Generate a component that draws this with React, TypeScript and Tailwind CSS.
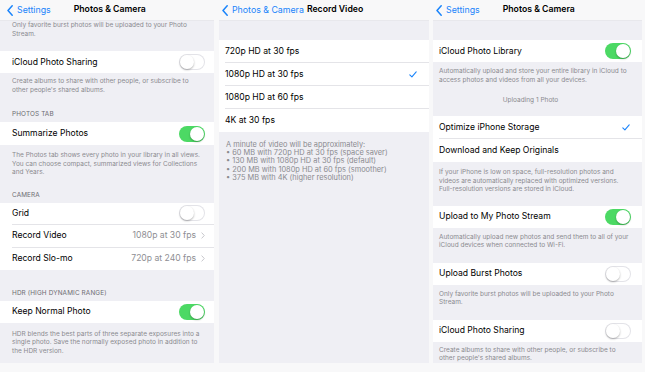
import React from 'react';

type Row = { label: string; h: number; right?: React.ReactNode };

function Chevron() {
  return (
    <svg width="6" height="11" viewBox="0 0 6 11" className="shrink-0">
      <path d="M5.2 0.8 L1 5.5 L5.2 10.2" fill="none" stroke="#1a84fb" strokeWidth="1.5" strokeLinecap="round" strokeLinejoin="round" />
    </svg>
  );
}

function Toggle({ on }: { on?: boolean }) {
  return (
    <span
      className={`w-[26px] h-[16px] rounded-full flex items-center px-[1px] shrink-0 ${
        on ? 'bg-[#4cd964] justify-end' : 'bg-white justify-start shadow-[inset_0_0_0_1px_#e3e3e8]'
      }`}
    >
      <span className="w-[14px] h-[14px] rounded-full bg-white shadow-[0_1px_2px_rgba(0,0,0,0.3)]" />
    </span>
  );
}

function Check() {
  return (
    <svg width="8" height="7" viewBox="0 0 8 7">
      <path d="M0.8 3.8 L2.9 5.9 L7.2 0.9" fill="none" stroke="#1a84fb" strokeWidth="1.1" strokeLinecap="round" strokeLinejoin="round" />
    </svg>
  );
}

function Value({ text }: { text: string }) {
  return (
    <span className="flex items-center gap-[5px] text-[#8e8e93]">
      {text}
      <svg width="4" height="7" viewBox="0 0 4 7">
        <path d="M0.6 0.6 L3.3 3.5 L0.6 6.4" fill="none" stroke="#c7c7cc" strokeWidth="1" />
      </svg>
    </span>
  );
}

function Group({ rows, pl, pr, mt }: { rows: Row[]; pl: string; pr: string; mt: string }) {
  return (
    <div className={`bg-white ${pl} ${mt}`}>
      {rows.map((r, i) => (
        <div
          key={r.label}
          style={{ height: r.h }}
          className={`flex items-center justify-between ${pr} text-[8.6px] text-black whitespace-nowrap ${
            i < rows.length - 1 ? 'border-b border-[#e4e4e8]' : ''
          }`}
        >
          <span>{r.label}</span>
          {r.right}
        </div>
      ))}
    </div>
  );
}

function Foot({ lines, cls, mt }: { lines: string[]; cls: string; mt: string }) {
  return (
    <div className={`${cls} ${mt} text-[6.5px] leading-[8.5px] text-[#8a8a8f] whitespace-nowrap`}>
      {lines.map((l) => (
        <div key={l}>{l}</div>
      ))}
    </div>
  );
}

function Header({ text, mt }: { text: string; mt: string }) {
  return (
    <div className={`px-[12px] ${mt} text-[6.4px] leading-[8px] tracking-[0.02em] text-[#6d6d72] whitespace-nowrap`}>{text}</div>
  );
}

function Nav({ back, title, gap, pl }: { back: string; title: string; gap: string; pl: string }) {
  return (
    <div className={`h-[21px] flex items-center ${pl} border-b border-[#e8e8ec] whitespace-nowrap`}>
      <Chevron />
      <span className="ml-[4px] text-[8.8px] text-[#1a84fb]">{back}</span>
      <span className={`${gap} text-[8.7px] font-semibold text-black`}>{title}</span>
    </div>
  );
}

export default function App() {
  return (
    <div className="w-[645px] h-[372px] bg-[#f8f8f9] flex overflow-hidden font-['Inter','Noto_Sans',sans-serif]">
      {/* Left: Photos & Camera, scrolled */}
      <div className="w-[214px] shrink-0 flex flex-col">
        <Nav back="Settings" title="Photos & Camera" gap="ml-[23px]" pl="pl-[7px]" />
        <div className="h-[342px] bg-[#efeff4] flex flex-col">
          <Foot cls="px-[12px]" mt="mt-0" lines={['Only favorite burst photos will be uploaded to your Photo', 'Stream.']} />
          <Group pl="pl-[12px]" pr="pr-[9px]" mt="mt-[13px]" rows={[{ label: 'iCloud Photo Sharing', h: 22, right: <Toggle /> }]} />
          <Foot
            cls="px-[12px]"
            mt="mt-[4px]"
            lines={['Create albums to share with other people, or subscribe to', "other people's shared albums."]}
          />
          <Header text="PHOTOS TAB" mt="mt-[16px]" />
          <Group pl="pl-[12px]" pr="pr-[9px]" mt="mt-[4px]" rows={[{ label: 'Summarize Photos', h: 23, right: <Toggle on /> }]} />
          <Foot
            cls="px-[12px]"
            mt="mt-[6px]"
            lines={[
              'The Photos tab shows every photo in your library in all views.',
              'You can choose compact, summarized views for Collections',
              'and Years.',
            ]}
          />
          <Header text="CAMERA" mt="mt-[14px]" />
          <Group
            pl="pl-[12px]"
            pr="pr-[9px]"
            mt="mt-[4px]"
            rows={[
              { label: 'Grid', h: 22, right: <Toggle /> },
              { label: 'Record Video', h: 23, right: <Value text="1080p at 30 fps" /> },
              { label: 'Record Slo-mo', h: 22, right: <Value text="720p at 240 fps" /> },
            ]}
          />
          <Header text="HDR (HIGH DYNAMIC RANGE)" mt="mt-[19px]" />
          <Group pl="pl-[12px]" pr="pr-[9px]" mt="mt-[4px]" rows={[{ label: 'Keep Normal Photo', h: 22, right: <Toggle on /> }]} />
          <Foot
            cls="px-[12px]"
            mt="mt-[7px]"
            lines={[
              'HDR blends the best parts of three separate exposures into a',
              'single photo. Save the normally exposed photo in addition to',
              'the HDR version.',
            ]}
          />
        </div>
      </div>

      {/* Middle: Record Video */}
      <div className="w-[210px] shrink-0 ml-[5px] flex flex-col">
        <Nav back="Photos & Camera" title="Record Video" gap="ml-[3px]" pl="pl-[3px]" />
        <div className="h-[342px] bg-[#efeff4] flex flex-col">
          <Group
            pl="pl-[6px]"
            pr="pr-[12px]"
            mt="mt-[19px]"
            rows={[
              { label: '720p HD at 30 fps', h: 23 },
              { label: '1080p HD at 30 fps', h: 23, right: <Check /> },
              { label: '1080p HD at 60 fps', h: 23 },
              { label: '4K at 30 fps', h: 23 },
            ]}
          />
          <div className="px-[7px] mt-[9px] text-[7.4px] leading-[8.2px] text-[#8a8a8f] whitespace-nowrap">
            <div>A minute of video will be approximately:</div>
            <div>• 60 MB with 720p HD at 30 fps (space saver)</div>
            <div>• 130 MB with 1080p HD at 30 fps (default)</div>
            <div>• 200 MB with 1080p HD at 60 fps (smoother)</div>
            <div>• 375 MB with 4K (higher resolution)</div>
          </div>
        </div>
      </div>

      {/* Right: Photos & Camera top */}
      <div className="w-[209px] shrink-0 ml-[4px] flex flex-col">
        <Nav back="Settings" title="Photos & Camera" gap="ml-[23px]" pl="pl-[3px]" />
        <div className="h-[342px] bg-[#efeff4] flex flex-col">
          <Group pl="pl-[6px]" pr="pr-[11px]" mt="mt-[19px]" rows={[{ label: 'iCloud Photo Library', h: 22, right: <Toggle on /> }]} />
          <Foot
            cls="px-[6px]"
            mt="mt-[5px]"
            lines={['Automatically upload and store your entire library in iCloud to', 'access photos and videos from all your devices.']}
          />
          <div className="mt-[12px] pr-[14px] text-center text-[6.5px] leading-[8px] text-[#8a8a8f]">Uploading 1 Photo</div>
          <Group
            pl="pl-[6px]"
            pr="pr-[12px]"
            mt="mt-[12px]"
            rows={[
              { label: 'Optimize iPhone Storage', h: 23, right: <Check /> },
              { label: 'Download and Keep Originals', h: 23 },
            ]}
          />
          <Foot
            cls="px-[6px]"
            mt="mt-[6px]"
            lines={[
              'If your iPhone is low on space, full-resolution photos and',
              'videos are automatically replaced with optimized versions.',
              'Full-resolution versions are stored in iCloud.',
            ]}
          />
          <Group pl="pl-[6px]" pr="pr-[11px]" mt="mt-[12px]" rows={[{ label: 'Upload to My Photo Stream', h: 22, right: <Toggle on /> }]} />
          <Foot
            cls="px-[6px]"
            mt="mt-[5px]"
            lines={['Automatically upload new photos and send them to all of your', 'iCloud devices when connected to Wi-Fi.']}
          />
          <Group pl="pl-[6px]" pr="pr-[11px]" mt="mt-[13px]" rows={[{ label: 'Upload Burst Photos', h: 22, right: <Toggle /> }]} />
          <Foot
            cls="px-[6px]"
            mt="mt-[5px]"
            lines={['Only favorite burst photos will be uploaded to your Photo', 'Stream.']}
          />
          <Group pl="pl-[6px]" pr="pr-[11px]" mt="mt-[13px]" rows={[{ label: 'iCloud Photo Sharing', h: 22, right: <Toggle /> }]} />
          <Foot
            cls="px-[6px]"
            mt="mt-[4px]"
            lines={['Create albums to share with other people, or subscribe to', "other people's shared albums."]}
          />
        </div>
      </div>
    </div>
  );
}
